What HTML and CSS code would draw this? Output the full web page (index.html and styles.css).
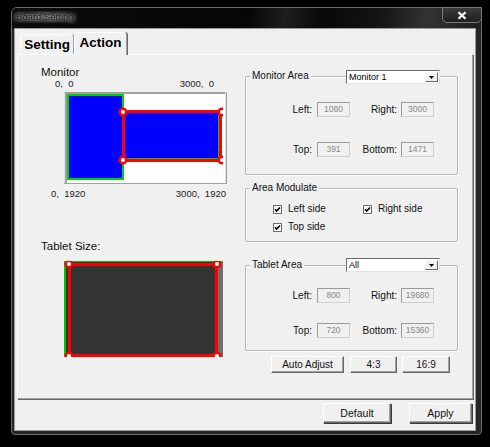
FILE: index.html
```html
<!DOCTYPE html>
<html>
<head>
<meta charset="utf-8">
<title>Board Setting</title>
<link rel="stylesheet" href="styles.css">
</head>
<body>
<div class="window">
  <div class="titlebar">
    <span class="title">Board Setting</span>
    <div class="close">
      <svg width="10" height="9" viewBox="0 0 10 9"><path d="M1.5 1.2 L8.5 7.8 M8.5 1.2 L1.5 7.8" stroke="#fff" stroke-width="2.2" fill="none"/></svg>
    </div>
  </div>
  <div class="client">
    <div class="tabs">
      <div class="tab">Setting</div>
      <div class="tab active">Action</div>
    </div>
    <div class="panel">
      <div class="left">
        <div class="lbl mon-lbl">Monitor</div>
        <div class="coords top"><span>0,  0</span><span>3000,  0</span></div>
        <svg class="mon-canvas" width="163" height="92" viewBox="0 0 163 92">
          <defs><clipPath id="mc"><rect x="2" y="2" width="157" height="88"/></clipPath></defs>
          <g shape-rendering="crispEdges">
            <rect width="163" height="92" fill="#fff"/>
            <rect x="0" y="0" width="163" height="2" fill="#a0a0a0"/>
            <rect x="0" y="0" width="1" height="92" fill="#e2e2e2"/>
            <rect x="1" y="0" width="2" height="92" fill="#a0a0a0"/>
            <rect x="161" y="0" width="1" height="92" fill="#e2e2e2"/>
            <rect x="162" y="0" width="1" height="92" fill="#9c9c9c"/>
            <rect x="0" y="91" width="163" height="1" fill="#a0a0a0"/>
          </g>
          <g clip-path="url(#mc)">
            <g shape-rendering="crispEdges">
              <rect x="3" y="2" width="57" height="86" fill="#00d000"/>
              <rect x="5" y="4" width="53" height="82" fill="#0000ff"/>
              <rect x="58" y="18" width="100" height="52" fill="#ff0000"/>
              <rect x="61" y="21" width="94" height="46" fill="#0000ff"/>
              <rect x="154" y="21" width="1" height="46" fill="#00d000"/>
              <rect x="61" y="66" width="94" height="1" fill="#00d000"/>
            </g>
            <circle cx="59" cy="20" r="3.3" fill="#fff" stroke="#f00" stroke-width="2.4"/>
            <circle cx="59" cy="68" r="3.3" fill="#fff" stroke="#f00" stroke-width="2.4"/>
            <circle cx="158" cy="20" r="3.3" fill="#fff" stroke="#f00" stroke-width="2.4"/>
            <circle cx="158" cy="68" r="3.3" fill="#fff" stroke="#f00" stroke-width="2.4"/>
          </g>
        </svg>
        <div class="coords bot"><span>0,  1920</span><span>3000,  1920</span></div>
        <div class="lbl tab-lbl">Tablet Size:</div>
        <svg class="tab-canvas" width="159" height="96" viewBox="0 0 159 96">
          <g shape-rendering="crispEdges">
            <rect width="159" height="96" fill="#333333"/>
            <rect x="154" y="0" width="5" height="96" fill="#6e6e6e"/>
            <rect x="0" y="0" width="159" height="1" fill="#00c800"/>
            <rect x="0" y="0" width="2" height="96" fill="#00c800"/>
            <rect x="4" y="2" width="150" height="94" fill="#ff0000"/>
            <rect x="7" y="5" width="144" height="88" fill="#333333"/>
          </g>
          <circle cx="5" cy="3" r="3.3" fill="#fff" stroke="#f00" stroke-width="2.4"/>
          <circle cx="153" cy="3" r="3.3" fill="#fff" stroke="#f00" stroke-width="2.4"/>
          <circle cx="5" cy="95" r="3.3" fill="#fff" stroke="#f00" stroke-width="2.4"/>
          <circle cx="153" cy="95" r="3.3" fill="#fff" stroke="#f00" stroke-width="2.4"/>
        </svg>
      </div>
      <div class="right">
        <div class="group g-mon">
          <span class="legend">Monitor Area</span>
          <div class="combo"><span class="ctext">Monitor 1</span><span class="drop"><svg width="5" height="3" viewBox="0 0 5 3"><path d="M0 0H5L2.5 3Z" fill="#000"/></svg></span></div>
          <div class="fields">
            <span class="flabel">Left:</span><span class="field">1080</span>
            <span class="flabel">Right:</span><span class="field">3000</span>
            <span class="flabel">Top:</span><span class="field">391</span>
            <span class="flabel">Bottom:</span><span class="field">1471</span>
          </div>
        </div>
        <div class="group g-mod">
          <span class="legend">Area Modulate</span>
          <div class="checks">
            <span class="check"><svg class="cb" width="9" height="9" viewBox="0 0 9 9"><rect x="0.5" y="0.5" width="8" height="8" fill="#f7f7f7" stroke="#6f6f6f"/><path d="M2 4.2 L3.6 6.1 L7 2.4" stroke="#000" stroke-width="1.5" fill="none"/></svg>Left side</span>
            <span class="check"><svg class="cb" width="9" height="9" viewBox="0 0 9 9"><rect x="0.5" y="0.5" width="8" height="8" fill="#f7f7f7" stroke="#6f6f6f"/><path d="M2 4.2 L3.6 6.1 L7 2.4" stroke="#000" stroke-width="1.5" fill="none"/></svg>Right side</span>
            <span class="check"><svg class="cb" width="9" height="9" viewBox="0 0 9 9"><rect x="0.5" y="0.5" width="8" height="8" fill="#f7f7f7" stroke="#6f6f6f"/><path d="M2 4.2 L3.6 6.1 L7 2.4" stroke="#000" stroke-width="1.5" fill="none"/></svg>Top side</span>
          </div>
        </div>
        <div class="group g-tab">
          <span class="legend">Tablet Area</span>
          <div class="combo"><span class="ctext">All</span><span class="drop"><svg width="5" height="3" viewBox="0 0 5 3"><path d="M0 0H5L2.5 3Z" fill="#000"/></svg></span></div>
          <div class="fields">
            <span class="flabel">Left:</span><span class="field">800</span>
            <span class="flabel">Right:</span><span class="field">19680</span>
            <span class="flabel">Top:</span><span class="field">720</span>
            <span class="flabel">Bottom:</span><span class="field">15360</span>
          </div>
        </div>
        <div class="btnrow">
          <button class="btn sm w-auto">Auto Adjust</button>
          <button class="btn sm w-43">4:3</button>
          <button class="btn sm w-169">16:9</button>
        </div>
      </div>
    </div>
    <div class="footer">
      <button class="btn lg w-def">Default</button>
      <button class="btn lg w-apply">Apply</button>
    </div>
  </div>
</div>
</body>
</html>
```
FILE: styles.css
```css
html, body {
  margin: 0;
  padding: 0;
}
body {
  width: 490px;
  height: 447px;
  overflow: hidden;
  background: #000;
  font-family: "Liberation Sans", Arial, sans-serif;
  color: #111;
}
.window {
  box-sizing: border-box;
  width: 471px;
  height: 428px;
  margin: 7px 0 0 11px;
  border: 1px solid #6c6c6c;
  border-radius: 6px 6px 4px 4px;
  background: #262626;
  display: flex;
  flex-direction: column;
}
.titlebar {
  height: 21px;
  flex: none;
  display: flex;
  justify-content: space-between;
  align-items: flex-start;
  border-radius: 5px 5px 0 0;
  background: linear-gradient(100deg, #0c0c0c 0%, #050505 50%, #1e1e1e 58%, #080808 66%, #141414 78%, #323232 88%, #1c1c1c 100%);
}
.title {
  margin: 3px 0 0 1px;
  padding: 0 3px;
  font-size: 9.5px;
  line-height: 12px;
  color: #1a1a1a;
  background: radial-gradient(ellipse at center, rgba(150,150,150,0.55) 0%, rgba(120,120,120,0.25) 60%, rgba(0,0,0,0) 100%);
  text-shadow: 0 0 4px rgba(255,255,255,0.6), 0 0 2px rgba(255,255,255,0.45);
}
.close {
  box-sizing: border-box;
  width: 40px;
  height: 16px;
  margin: -1px -1px 0 0;
  border: 1px solid #7a7a7a;
  border-radius: 0 0 5px 5px;
  background: linear-gradient(#3c3c3c, #1e1e1e);
  display: flex;
  align-items: center;
  justify-content: center;
}
.close svg { display: block; }
.client {
  flex: none;
  height: 401px;
  margin: 0 6px 4px 3px;
  background: #f0f0f0;
  box-shadow: 0 0 0 1px #9a9a9a;
  display: flex;
  flex-direction: column;
}
.tabs {
  height: 25px;
  flex: none;
  display: flex;
  align-items: flex-end;
  padding-left: 5px;
}
.tab {
  box-sizing: border-box;
  width: 54px;
  height: 20px;
  border: 1px solid;
  border-color: #fff #a0a0a0 transparent #fff;
  border-bottom: none;
  border-radius: 3px 3px 0 0;
  box-shadow: 1px 0 0 #696969;
  font-size: 13.5px;
  font-weight: bold;
  line-height: 19px;
  text-align: center;
  color: #000;
}
.tab.active {
  position: relative;
  z-index: 1;
  width: 53px;
  height: 23px;
  margin-bottom: -1px;
  line-height: 20px;
  background: #f0f0f0;
}
.panel {
  box-sizing: border-box;
  height: 345px;
  flex: none;
  margin: 0 2px;
  border: 1px solid;
  border-color: #fff #a0a0a0 #a0a0a0 #fff;
  box-shadow: 1px 1px 0 #696969;
  display: flex;
}
.left {
  width: 227px;
  flex: none;
}
.lbl {
  font-size: 11.5px;
  line-height: 14px;
  color: #111;
}
.mon-lbl { margin: 10px 0 0 23px; }
.tab-lbl { margin: 40px 0 0 23px; }
.coords {
  display: flex;
  justify-content: space-between;
  font-size: 9.5px;
  line-height: 10px;
  white-space: pre;
  color: #1a1a1a;
}
.coords.top { margin-left: 37px; width: 159px; }
.coords.bot { margin: 5px 0 0 33px; width: 175px; }
.mon-canvas { display: block; margin: 3px 0 0 46px; }
.tab-canvas { display: block; margin: 8px 0 0 46px; }
.right {
  width: 213px;
  flex: none;
  padding-top: 21px;
}
.group {
  position: relative;
  box-sizing: border-box;
  border: 1px solid #b7b7b7;
  border-radius: 2px;
  box-shadow: inset 1px 1px 0 #fff, 1px 1px 0 #fff;
}
.g-mon { height: 99px; }
.g-mod { height: 54px; margin-top: 13px; }
.g-tab { height: 86px; margin-top: 23px; }
.legend {
  position: absolute;
  top: -7px;
  left: 4px;
  padding: 0 2px;
  background: #f0f0f0;
  font-size: 10px;
  line-height: 12px;
  color: #111;
}
.combo {
  position: absolute;
  top: -7px;
  left: 100px;
  box-sizing: border-box;
  width: 94px;
  height: 14px;
  background: #fff;
  border: 1px solid;
  border-color: #6a6a6a #e3e3e3 #e3e3e3 #6a6a6a;
  display: flex;
  align-items: center;
  justify-content: space-between;
}
.g-tab .combo { top: -8px; }
.ctext {
  padding-left: 2px;
  font-size: 9px;
  line-height: 11px;
  color: #000;
}
.drop {
  box-sizing: border-box;
  width: 13px;
  height: 10px;
  margin-right: 1px;
  background: #f0f0f0;
  border: 1px solid;
  border-color: #fff #696969 #696969 #fff;
  display: flex;
  align-items: center;
  justify-content: center;
}
.drop svg { display: block; }
.fields {
  display: grid;
  grid-template-columns: 66px 38px 47px 37px;
  grid-auto-rows: 15px;
  align-items: center;
  font-size: 10px;
}
.g-mon .fields { padding-top: 25px; row-gap: 25px; }
.g-tab .fields { padding-top: 22px; row-gap: 20px; }
.flabel {
  justify-self: end;
  line-height: 12px;
  color: #111;
}
.field {
  justify-self: end;
  box-sizing: border-box;
  width: 33px;
  height: 15px;
  border: 1px solid;
  border-color: #9a9a9a #cfcfcf #cfcfcf #9a9a9a;
  background: #f0f0f0;
  font-size: 8.5px;
  line-height: 13px;
  text-align: center;
  color: #8a8a8a;
}
.checks {
  display: grid;
  grid-template-columns: 90px auto;
  grid-auto-rows: 18px;
  align-items: center;
  padding: 11px 0 0 27px;
  font-size: 10px;
  color: #111;
}
.check {
  display: flex;
  align-items: center;
  gap: 6px;
  line-height: 12px;
}
.cb { display: block; flex: none; }
.btnrow {
  display: flex;
  gap: 5px;
  margin-top: 5px;
  padding-left: 26px;
}
.btn {
  box-sizing: border-box;
  padding: 0;
  margin: 0;
  background: #f0f0f0;
  border: 1px solid;
  border-color: #fff #696969 #696969 #fff;
  box-shadow: inset -1px -1px 0 #a0a0a0;
  font-family: "Liberation Sans", Arial, sans-serif;
  color: #111;
  display: flex;
  align-items: center;
  justify-content: center;
}
.btn.sm { height: 17px; font-size: 10px; }
.btn.lg { height: 20px; font-size: 10.5px; box-shadow: inset -1px -1px 0 #a0a0a0, 1px 1px 0 #3a3a3a; }
.w-auto { width: 73px; margin-right: 1px; }
.w-43 { width: 47px; }
.w-169 { width: 48px; }
.w-def { width: 68px; }
.w-apply { width: 63px; }
.footer {
  box-sizing: border-box;
  height: 31px;
  flex: none;
  display: flex;
  justify-content: flex-end;
  gap: 18px;
  padding: 4px 3px 0 0;
}
```
